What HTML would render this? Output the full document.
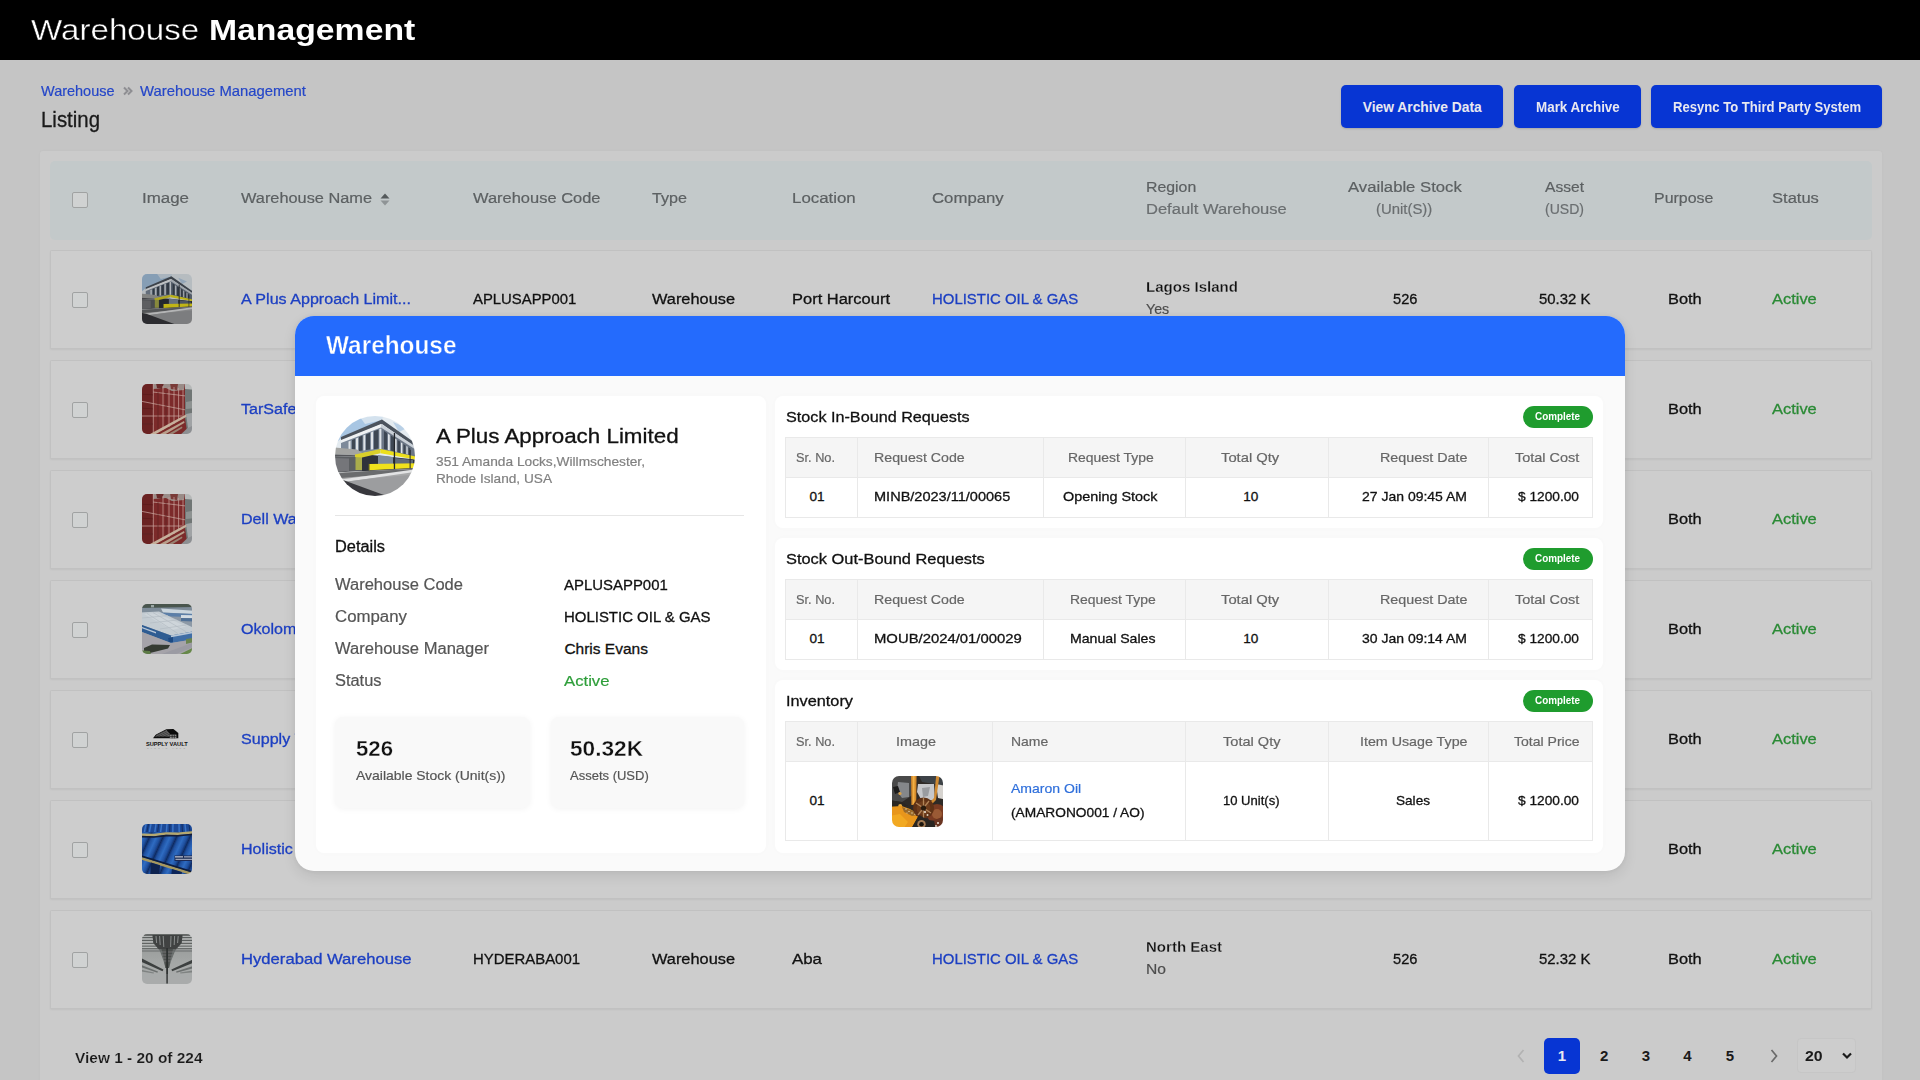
<!DOCTYPE html>
<html><head><meta charset="utf-8"><title>Warehouse Management</title>
<style>
*{box-sizing:border-box;margin:0;padding:0}
html,body{width:1920px;height:1080px;overflow:hidden;background:#c5c5c5;font-family:"Liberation Sans",sans-serif;}
.abs{position:absolute}
.t{position:absolute;white-space:pre;transform-origin:0 0;}
#topbar{left:0;top:0;width:1920px;height:60px;background:#000}
.btn{position:absolute;top:85px;height:43px;background:#0735d3;border-radius:5px;box-shadow:0 1px 2px rgba(0,0,0,.15)}
#panel{left:40px;top:151px;width:1842px;height:960px;background:#cbcbcb;border-radius:3px;box-shadow:0 0 3px rgba(0,0,0,.03)}
#thead{left:50px;top:161px;width:1822px;height:78.5px;background:#c3c9ca;border-radius:5px}
.row{position:absolute;left:50px;width:1822px;height:99.5px;background:#cdcdcd;border:1px solid #c1c1c1;border-radius:1.5px;box-shadow:0 1px 2px rgba(0,0,0,.05)}
.cb{position:absolute;left:72px;width:16px;height:16px;border:1px solid #a0a2a2;border-radius:2px;background:#d0d2d2}
.th{position:absolute;left:142px;width:50px;height:50px;border-radius:5px;overflow:hidden}
.th svg{display:block}
#modal{left:295px;top:316px;width:1330px;height:555px;border-radius:19px;background:#fafafa;box-shadow:0 5px 14px rgba(0,0,0,.09),0 0 5px rgba(0,0,0,.05);overflow:hidden}
#mhead{left:0;top:0;width:1330px;height:60px;background:#246bfd}
.card{position:absolute;background:#fff;border-radius:8px;box-shadow:0 0 8px rgba(0,0,0,.015)}
.stat{position:absolute;top:717px;height:91px;background:#f9f9f9;border-radius:8px;box-shadow:0 1px 6px rgba(0,0,0,.05)}
.tbl{position:absolute;left:785px;width:808px;border:1px solid #e9e9e9;background:#fff}
.tbl .hd{position:absolute;left:0;top:0;width:100%;height:40px;background:#f5f5f5;border-bottom:1px solid #e9e9e9}
.tbl i{position:absolute;top:0;width:1px;height:100%;background:#e9e9e9}
.badge{position:absolute;left:1523px;width:70px;height:22px;border-radius:11px;background:#1f9c2e}
</style></head><body>
<svg width="0" height="0" style="position:absolute">
<defs>
<filter id="bl" x="-20%" y="-20%" width="140%" height="140%"><feGaussianBlur stdDeviation="0.45"/></filter>
<filter id="bl2" x="-20%" y="-20%" width="140%" height="140%"><feGaussianBlur stdDeviation="0.7"/></filter>
<symbol id="im1" viewBox="0 0 80 80" overflow="visible">
 <rect x="-6" y="-6" width="92" height="92" fill="#e4ebf0"/>
 <polygon points="-6,-6 38,-6 47,4 8,21 -6,32" fill="#a8c6e3"/>
 <polygon points="20,-6 50,-6 47,4 30,8" fill="#d4e2ee"/>
 <polygon points="58,6 72,12 64,16" fill="#b9d0e6"/>
 <!-- roof -->
 <polygon points="6,21 47,3.5 86,31 86,35 47,8 6,25" fill="#4b535d"/>
 <polygon points="6,24 46,8 46,11.5 6,27.5" fill="#eef1f3"/>
 <polygon points="46,8 86,34 86,37 46,11.5" fill="#c9d0d7"/>
 <!-- upper facade -->
 <polygon points="6,27 46,11.5 46,34 22,38 6,34" fill="#7d8a9a"/>
 <polygon points="46,11.5 86,37 86,44 46,34" fill="#6c7786"/>
 <g fill="#3c4652"><polygon points="17,24 20,22.8 20,35.5 17,36"/><polygon points="24,21 27.5,19.6 27.5,34.5 24,35"/><polygon points="31,18.4 35,16.8 35,33.4 31,34"/><polygon points="39,15.2 43.5,13.4 43.5,32.6 39,33.2"/><polygon points="49,15 52,17 52,33.6 49,33"/><polygon points="56,19.5 59,21.5 59,35.4 56,34.6"/><polygon points="62.5,24 65,25.6 65,36.8 62.5,36.2"/><polygon points="68.5,28 70.5,29.4 70.5,38 68.5,37.6"/><polygon points="73.5,31.2 75.5,32.6 75.5,39.2 73.5,38.8"/></g>
 <g fill="#dfe4e8"><polygon points="13.5,25.6 15.6,24.8 15.6,36.4 13.5,36.8"/><polygon points="21,22.6 23,21.8 23,35.2 21,35.6"/><polygon points="28.4,19.4 30.2,18.7 30.2,34.2 28.4,34.5"/><polygon points="36,16.4 38,15.6 38,33.2 36,33.5"/><polygon points="44.4,13 46.4,12.4 46.4,33 44.4,33"/><polygon points="53,17.8 54.8,19 54.8,34.4 53,34"/><polygon points="60,22.4 61.6,23.4 61.6,36 60,35.6"/><polygon points="66,26.4 67.4,27.3 67.4,37.2 66,36.9"/><polygon points="71.4,30 72.6,30.8 72.6,38.4 71.4,38.1"/></g>
 <!-- canopy left -->
 <polygon points="-6,31 22,33.5 28,37.5 28,39.5 -6,38" fill="#a3a4a2"/>
 <polygon points="-6,38 28,39.5 28,41 -6,40" fill="#55575a"/>
 <!-- ground floor -->
 <polygon points="-6,40 28,41 28,55 -6,57" fill="#5c5e62"/>
 <polygon points="-2,42 14,42.5 14,55 -2,56" fill="#74767a"/>
 <polygon points="27,38 86,44 86,56 27,55" fill="#2f333b"/>
 <polygon points="43,39 58,41 58,48 43,48" fill="#7d8b9b"/>
 <polygon points="60,42 78,44 78,48 60,48" fill="#5e6a78"/>
 <!-- olive pillar -->
 <polygon points="20.5,39 27,39.5 27,54 20.5,54" fill="#a9ac4c"/>
 <!-- yellow bands -->
 <polygon points="20,38.6 45.5,33 45.5,37.2 27,41.4 20,41" fill="#d9cf2a"/>
 <polygon points="45.5,33 86,41.6 86,44.6 45.5,37.2" fill="#ecdf1c"/>
 <polygon points="34,48 86,47.2 86,51.6 34,54.2" fill="#f0e21a"/>
 <rect x="33.6" y="47.8" width="1" height="6.6" fill="#6b6a2a"/>
 <!-- lamp post -->
 <rect x="58.8" y="17" width="1.3" height="37" fill="#23262c"/>
 <rect x="74.6" y="34" width="1" height="19" fill="#23262c"/>
 <!-- ground -->
 <polygon points="-6,57 30,55 86,52 86,86 -6,86" fill="#a7a8a9"/>
 <polygon points="-6,58 34,55 86,53 86,55 30,60 -6,63" fill="#6b6c6e"/>
 <polygon points="2,64 86,52.5 86,55 10,66" fill="#e2e3e4"/>
 <polygon points="8,66 40,62 86,58 86,86 50,86" fill="#9c9d9f"/>
 <polygon points="-6,61 8,64 68,86 -6,86" fill="#38393c"/>
</symbol>
<symbol id="im2" viewBox="0 0 50 50" overflow="visible">
 <rect x="-4" y="-4" width="58" height="58" fill="#7b2c2a"/>
 <rect x="-4" y="-4" width="15" height="58" fill="#6a2323"/>
 <polygon points="11,-4 42,-4 42,6 30,7 24,4 11,5" fill="#9a8c88"/>
 <polygon points="14,-1 22,-1 20,5 15,4" fill="#6a2a2a"/>
 <polygon points="28,-1 36,0 35,6 29,5" fill="#7a3a38"/>
 <g stroke="#c79d97" stroke-width=".9" opacity=".85"><line x1="11.3" y1="0" x2="11.3" y2="50"/><line x1="21" y1="2" x2="21" y2="46"/><line x1="27" y1="3" x2="27" y2="43"/><line x1="32" y1="3" x2="32" y2="40"/><line x1="36.6" y1="4" x2="36.6" y2="37"/><line x1="41" y1="5" x2="41" y2="34"/></g>
 <g stroke="#c9a59f" stroke-width=".9" opacity=".8"><line x1="-2" y1="17" x2="44" y2="26"/><line x1="-2" y1="32" x2="40" y2="32"/><line x1="11" y1="8" x2="44" y2="12"/></g>
 <g stroke="#531a1a" stroke-width=".8" opacity=".7"><line x1="0" y1="10" x2="11" y2="11"/><line x1="0" y1="24" x2="11" y2="25"/><line x1="0" y1="40" x2="11" y2="40"/><line x1="16" y1="8" x2="16" y2="46"/><line x1="24" y1="8" x2="24" y2="42"/></g>
 <!-- right side -->
 <polygon points="43,-4 54,-4 54,54 46,54 43,34" fill="#6f7675"/>
 <polygon points="42,-4 54,-4 54,6 43,5" fill="#b5b8b8"/>
 <polygon points="44,18 54,16 54,24 44,25" fill="#8d9291"/>
 <polygon points="35,54 54,36 54,54" fill="#8d9093"/>
 <polygon points="44,30 54,28 54,40 46,44" fill="#a0a3a5"/>
 <!-- pallet diagonals -->
 <polygon points="8,50 44,30.6 44.6,32.8 13,50.4" fill="#c6b09c"/>
 <polygon points="18,50 42,37 42.6,38.8 23,50.4" fill="#b89f8c"/>
 <polygon points="26,50 40,42.5 40.4,44 30,50.4" fill="#9a8272"/>
</symbol>
<symbol id="im4" viewBox="0 0 50 50" overflow="visible">
 <rect x="-4" y="-4" width="58" height="58" fill="#8d99a6"/>
 <rect x="-4" y="-4" width="58" height="8" fill="#48554e"/>
 <rect x="9" y="1" width="3" height="2.4" fill="#9aa6a4"/>
 <polygon points="-4,4 54,3 54,9 -4,9" fill="#7e8c99"/>
 <!-- secondary buildings -->
 <polygon points="19,4.6 54,7 54,10 21,8.6" fill="#cbd6de"/>
 <polygon points="17,8.6 54,10 54,13 30,12.6 17,10.4" fill="#5b7fa8"/>
 <polygon points="39,11 54,11.4 54,14.4 39,14" fill="#d3dce3"/>
 <polygon points="39,14 54,14.4 54,17.6 39,17" fill="#4f6f96"/>
 <!-- main roof -->
 <polygon points="-4,8.6 17,7.4 54,25 54,27 29,31.6 -4,19.6" fill="#c4ccd2"/>
 <polygon points="2,10 15,9 44,22.6 30,26" fill="#ced5da"/>
 <g stroke="#b3bcc3" stroke-width=".7"><line x1="5" y1="9.4" x2="36" y2="29.6"/><line x1="11" y1="8.6" x2="44" y2="27.6"/><line x1="0" y1="14" x2="26" y2="11.6"/><line x1="8" y1="19" x2="35" y2="16"/><line x1="18" y1="25" x2="44" y2="21"/></g>
 <!-- walls -->
 <polygon points="-4,19.6 29,31.6 29,39 -4,26.4" fill="#2f5c92"/>
 <polygon points="-4,21.4 14,28 14,29.4 -4,22.8" fill="#b9c8d8"/>
 <polygon points="29,31.6 54,27 54,35 29,39" fill="#3f6ea6"/>
 <polygon points="29,31.6 54,27 54,28.6 29,33.2" fill="#b7c6d6"/>
 <polygon points="26,34 31,33 31,38.6 27,38.2" fill="#1f4a82"/>
 <!-- ground -->
 <polygon points="-4,26.4 29,39 54,35 54,54 -4,54" fill="#a5a3a9"/>
 <polygon points="9,54 54,37.6 54,42 24,54" fill="#9b9ba3"/>
 <polygon points="30,54 54,42.4 54,54" fill="#66884a"/>
 <polygon points="44,35 54,33.4 54,37.4 44,40" fill="#6b8450"/>
 <polygon points="2,44 10,40.6 28,41 26,44.6 8,49 2,49" fill="#343a30"/>
 <polygon points="-4,46 8,47 10,54 -4,54" fill="#5c7a44"/>
</symbol>
<symbol id="im5" viewBox="0 0 50 50" overflow="visible">
 <polygon points="11.3,23.8 14,20.4 24.3,15.2 31.4,14.9 36.3,19 36.3,24.3 11.3,24.3" fill="#0c0c0c"/>
 <polygon points="14.6,20.8 24.4,15.9 27.6,19.4 27.6,22.4 13,22.4" fill="#6d6d6d"/>
 <g stroke="#0c0c0c" stroke-width=".45"><line x1="13" y1="22" x2="24" y2="16.6"/><line x1="15" y1="22.6" x2="25.6" y2="17.6"/><line x1="18" y1="22.8" x2="26.8" y2="18.8"/><line x1="21.6" y1="22.8" x2="27.6" y2="20.2"/></g>
 <rect x="27.8" y="20.6" width="6.6" height="3.7" fill="#8a8a8a"/>
 <g fill="#0c0c0c"><rect x="29.8" y="20.6" width=".6" height="3.7"/><rect x="31.9" y="20.6" width=".6" height="3.7"/><rect x="27.8" y="22.2" width="6.6" height=".5"/></g>
 <text x="3.9" y="31.5" font-family="Liberation Sans, sans-serif" font-weight="700" font-size="4.7" fill="#111" textLength="41.8" lengthAdjust="spacingAndGlyphs">SUPPLY VAULT</text>
 <text x="5" y="35.4" font-family="Liberation Sans, sans-serif" font-size="2.4" fill="#9a9a9a" textLength="38" lengthAdjust="spacing">SLOGAN HERE</text>
</symbol>
<symbol id="im6" viewBox="0 0 50 50" overflow="visible">
 <defs><linearGradient id="g6" x1="0" y1="0" x2="1" y2="0.45" spreadMethod="repeat" gradientUnits="userSpaceOnUse" gradientTransform="scale(11.2 11.2)">
  <stop offset="0" stop-color="#0f2b62"/><stop offset=".18" stop-color="#1f4f9e"/><stop offset=".5" stop-color="#2f6cc2"/><stop offset=".8" stop-color="#1f4f9e"/><stop offset="1" stop-color="#0f2b62"/></linearGradient></defs>
 <rect x="-4" y="-4" width="58" height="58" fill="url(#g6)"/>
 <!-- top band -->
 <rect x="-4" y="-4" width="58" height="12.5" fill="#1c4a98"/>
 <g stroke="#3a73c6" stroke-width="1.5"><line x1="4" y1="0" x2="2.4" y2="8"/><line x1="9" y1="0" x2="7.4" y2="8"/><line x1="14" y1="0" x2="12.8" y2="8"/><line x1="19.6" y1="0" x2="18.6" y2="8"/><line x1="25" y1="0" x2="24.4" y2="8"/><line x1="31" y1="0" x2="30.8" y2="8"/><line x1="37" y1="0" x2="37.2" y2="8"/><line x1="43" y1="0" x2="43.8" y2="8"/></g>
 <g stroke="#12306a" stroke-width="1.1"><line x1="6.5" y1="0" x2="4.9" y2="8"/><line x1="16.8" y1="0" x2="15.6" y2="8"/><line x1="28" y1="0" x2="27.6" y2="8"/><line x1="40" y1="0" x2="40.5" y2="8"/><line x1="47" y1="0" x2="48" y2="8"/></g>
 <!-- straps -->
 <polygon points="-2,9.4 12,9.8 24,8.2 36,8.6 54,6.8 54,9.2 36,11 24,10.8 12,12.2 -2,11.8" fill="#b5a870"/>
 <polygon points="-2,11.8 12,12.2 24,10.8 36,11 54,9.2 54,10.8 36,12.6 24,12.4 12,13.8 -2,13.4" fill="#121d38"/>
 <polygon points="-2,32.4 54,49.6 54,52.6 -2,35.2" fill="#a6985f"/>
 <polygon points="-2,30.8 54,48 54,49.8 -2,32.6" fill="#0d1c3e"/>
 <polygon points="9,38.4 18,41.2 17,54 8,54" fill="#0e2250"/>
 <polygon points="30,45 40,48 39,54 29,54" fill="#10285a"/>
 <!-- label -->
 <rect x="32.5" y="31.4" width="22" height="5.6" fill="#1b2c55"/>
 <rect x="33" y="32.2" width="8" height="1.3" fill="#b9bccb"/><rect x="42" y="32.2" width="9" height="1.3" fill="#9aa0b6"/>
 <rect x="33.5" y="34.8" width="17" height="1.1" fill="#a9aec2"/>
</symbol>
<symbol id="im7" viewBox="0 0 50 50" overflow="visible">
 <defs><linearGradient id="g7" x1="0" y1="0" x2="0" y2="1"><stop offset="0" stop-color="#8d908f"/><stop offset=".55" stop-color="#a4a7a6"/><stop offset="1" stop-color="#adafaf"/></linearGradient></defs>
 <rect x="-4" y="-4" width="58" height="58" fill="url(#g7)"/>
 <g fill="#5c605f"><rect x="-4" y="3" width="58" height="1.2"/><rect x="-4" y="5.8" width="58" height="1.2"/><rect x="-4" y="8.8" width="58" height="1.1"/><rect x="-4" y="11.6" width="58" height="1"/><rect x="-4" y="14.2" width="58" height=".9"/><rect x="-4" y="16.6" width="58" height=".8"/></g>
 <g fill="#b9bcbb"><rect x="-4" y="1.4" width="58" height="1.4"/><rect x="-4" y="4.4" width="58" height="1.2"/><rect x="-4" y="7.3" width="58" height="1.2"/><rect x="-4" y="10.2" width="58" height="1.1"/><rect x="-4" y="12.9" width="58" height="1"/></g>
 <rect x="2" y=".6" width="46" height=".9" fill="#2a2d2c"/>
 <!-- funnel -->
 <polygon points="10.5,1 40.5,1 39.6,9 33,17 29,27 27,34 23.4,34 21.6,27 18,17 11.4,9" fill="#666a69"/><polygon points="10.5,1 40.5,1 39.6,9 34,15 16.6,15 11.4,9" fill="#3f4342"/><polygon points="19.5,15 31,15 28,27 27,34 23.4,34 22.4,27" fill="#4d5150"/>
 <g stroke="#9da09f" stroke-width=".8"><line x1="14" y1="2" x2="14.6" y2="9"/><line x1="17.6" y1="2" x2="18.2" y2="11"/><line x1="21.2" y1="2" x2="21.8" y2="13"/><line x1="29" y1="2" x2="28.6" y2="13"/><line x1="32.6" y1="2" x2="32.2" y2="11"/><line x1="36.2" y1="2" x2="35.6" y2="9"/></g>
 <g stroke="#7f8382" stroke-width=".7"><line x1="19" y1="18" x2="32" y2="18"/><line x1="20" y1="21" x2="31" y2="21"/><line x1="21" y1="24" x2="30" y2="24"/><line x1="22" y1="27" x2="29" y2="27"/></g>
 <rect x="24.2" y="14" width="1.8" height="35.5" fill="#2e3231"/>
 <!-- diagonal beams -->
 <polygon points="-4,22.6 21.4,35.6 20.6,37.2 -4,26.4" fill="#3c403f"/>
 <polygon points="54,24 29.4,35.6 30.2,37.2 54,27.8" fill="#3c403f"/>
 <polygon points="-4,29.6 16,37.6 15.4,38.8 -4,32" fill="#6c706f"/>
 <polygon points="54,31 34,37.6 34.6,38.8 54,33.4" fill="#6c706f"/>
 <polygon points="-4,35 12,38.6 11.6,39.6 -4,37" fill="#7f8382"/>
 <polygon points="54,36 38,38.6 38.4,39.6 54,38" fill="#7f8382"/>
 <rect x="-4" y="40" width="58" height="14" fill="#a8abab" opacity=".75"/>
 <rect x="24.4" y="40" width="1.4" height="9.5" fill="#3a3e3d"/>
</symbol>
<symbol id="im8" viewBox="0 0 51 51" overflow="visible">
 <rect x="-4" y="-4" width="59" height="59" fill="#2f2a27"/>
 <polygon points="-4,-4 20,-4 19,20 10,26 -4,24" fill="#4a4a4a"/>
 <polygon points="6,6 17,7 17,21 10,22 5,15" fill="#85878a"/>
 <polygon points="1,11 6,10 8,16 3,18" fill="#1d1b1a"/>
 <polygon points="25,-4 55,-4 55,10 42,8 30,6" fill="#3e4246"/>
 <polygon points="26,8 42,8 43,24 30,25 25,16" fill="#c6c7ca"/>
 <polygon points="30,12 38,11 36,20 31,21" fill="#9a9ca0"/>
 <polygon points="44,8 55,10 55,24 46,22" fill="#d6d3cf"/>
 <!-- amber streams -->
 <polygon points="19,-4 24.6,-4 24.2,29 19.4,29" fill="#d48a2c"/>
 <polygon points="20.6,-4 22.6,-4 22.4,28 20.8,28" fill="#f0b045"/>
 <polygon points="44.5,-4 48,-4 44,24 38,30 36,28 42,22" fill="#d08a30"/>
 <!-- mid dark -->
 <polygon points="-4,24 10,26 16,30 -4,32" fill="#2a2620"/>
 <circle cx="8" cy="17.5" r="1.6" fill="#d8a24a"/>
 <circle cx="8.2" cy="30" r="2" fill="#e0a840"/>
 <!-- amber pool -->
 <polygon points="-4,31 9.5,30 18,33 27,39 18,55 -4,55" fill="#e8961c"/>
 <polygon points="-4,40 8,38 16,46 10,55 -4,55" fill="#f2a922"/>
 <polygon points="10,31 22,35 26,39 20,40 12,36" fill="#9a6a2a"/>
 <g fill="#e8d9b8"><circle cx="14" cy="33" r=".7"/><circle cx="17" cy="35.4" r=".7"/><circle cx="20" cy="37" r=".7"/><circle cx="23" cy="38.4" r=".6"/><circle cx="15" cy="37" r=".6"/></g>
 <!-- gears -->
 <circle cx="45" cy="38" r="10" fill="#7a3a22"/>
 <circle cx="45" cy="38" r="5" fill="#9a5a34"/>
 <circle cx="31.5" cy="32" r="10.5" fill="#5e3016"/>
 <circle cx="31.5" cy="32" r="7" fill="#6e3c1c"/>
 <g stroke="#b08458" stroke-width="1.3"><line x1="24" y1="27" x2="39" y2="37"/><line x1="26" y1="39" x2="37" y2="25"/><line x1="31.5" y1="22" x2="31.5" y2="42"/></g>
 <circle cx="31.5" cy="32" r="2.6" fill="#2a1a10"/>
 <circle cx="33" cy="36" r="1.1" fill="#e6dccc"/><circle cx="35.5" cy="39" r="1" fill="#e0d2bc"/>
 <!-- bottom -->
 <polygon points="18,55 27,39 36,44 52,46 55,55" fill="#2b2622"/>
 <circle cx="29.5" cy="48.3" r="4.2" fill="#a57c54"/>
 <circle cx="29.5" cy="48.3" r="2.3" fill="#1a1410"/>
 <polygon points="42,44 55,40 55,55 44,55" fill="#6a3420"/>
 <circle cx="46" cy="47" r="1" fill="#efe6da"/><circle cx="44" cy="50" r=".9" fill="#efe6da"/>
</symbol>

</defs></svg>

<!-- ===== background page ===== -->
<div class="abs" id="topbar"></div>
<div class="btn" style="left:1341px;width:162px"></div>
<div class="btn" style="left:1514px;width:127px"></div>
<div class="btn" style="left:1651px;width:231px"></div>
<svg class="abs" style="left:122px;top:85px" width="12" height="12" viewBox="0 0 12 12"><path d="M2 2.5 L5.5 6 L2 9.5 M6 2.5 L9.5 6 L6 9.5" stroke="#8e8e92" stroke-width="2" fill="none"/></svg>
<div class="abs" id="panel"></div>
<div class="abs" id="thead"></div>
<div class="cb" style="top:192px"></div>
<svg class="abs" style="left:380px;top:193px" width="10" height="13" viewBox="0 0 10 13"><polygon points="5,0.5 9.5,5.5 0.5,5.5" fill="#555a5c"/><polygon points="5,12.5 9.5,7.5 0.5,7.5" fill="#8f9496"/></svg>
<div class="row" style="top:249.5px"></div>
<div class="cb" style="top:291.7px"></div>
<div class="th" style="top:274px"><svg width="50" height="50"><use href="#im1" filter="url(#bl)"/></svg><div class="abs" style="left:0;top:0;width:50px;height:50px;background:rgba(0,0,0,.2)"></div></div>
<div class="row" style="top:359.5px"></div>
<div class="cb" style="top:401.7px"></div>
<div class="th" style="top:384px"><svg width="50" height="50"><use href="#im2" filter="url(#bl)"/></svg></div>
<div class="row" style="top:469.5px"></div>
<div class="cb" style="top:511.7px"></div>
<div class="th" style="top:494px"><svg width="50" height="50"><use href="#im2" filter="url(#bl)"/></svg></div>
<div class="row" style="top:579.5px"></div>
<div class="cb" style="top:621.7px"></div>
<div class="th" style="top:604px"><svg width="50" height="50"><use href="#im4" filter="url(#bl)"/></svg></div>
<div class="row" style="top:689.5px"></div>
<div class="cb" style="top:731.7px"></div>
<div class="th" style="top:714px"><svg width="50" height="50"><use href="#im5"/></svg></div>
<div class="row" style="top:799.5px"></div>
<div class="cb" style="top:841.7px"></div>
<div class="th" style="top:824px"><svg width="50" height="50"><use href="#im6" filter="url(#bl)"/></svg></div>
<div class="row" style="top:909.5px"></div>
<div class="cb" style="top:951.7px"></div>
<div class="th" style="top:934px"><svg width="50" height="50"><use href="#im7" filter="url(#bl)"/></svg></div>

<!-- pagination -->
<svg class="abs" style="left:1514px;top:1047px" width="14" height="18" viewBox="0 0 14 18"><path d="M9.5 3 L4.5 9 L9.5 15" stroke="#b2b2b2" stroke-width="1.7" fill="none"/></svg>
<div class="abs" style="left:1544px;top:1038px;width:36px;height:36px;border-radius:5px;background:#0735d3"></div>
<svg class="abs" style="left:1767px;top:1047px" width="14" height="18" viewBox="0 0 14 18"><path d="M4.5 3 L9.5 9 L4.5 15" stroke="#6a6a6a" stroke-width="1.7" fill="none"/></svg>
<div class="abs" style="left:1797px;top:1038px;width:59px;height:35px;border-radius:4px;background:#cdcdcd;border:1px solid #c6c6c6"></div>
<svg class="abs" style="left:1841px;top:1051px" width="12" height="10" viewBox="0 0 12 10"><path d="M2 2.5 L6 6.5 L10 2.5" stroke="#1a1a1a" stroke-width="2.2" fill="none"/></svg>
<span class="t" style="left:30.50px;top:13.15px;font-size:29px;line-height:35px;color:#fff;transform:scaleX(1.1427);-webkit-text-stroke:0.38px #000;">Warehouse</span>
<span class="t" style="left:208.75px;top:13.15px;font-size:29px;line-height:35px;color:#fff;font-weight:700;transform:scaleX(1.1635);">Management</span>
<span class="t" style="left:41.00px;top:81.80px;font-size:15px;line-height:18px;color:#2446c8;transform:scaleX(0.9651);-webkit-text-stroke:0.2px;">Warehouse</span>
<span class="t" style="left:140.00px;top:81.80px;font-size:15px;line-height:18px;color:#2446c8;transform:scaleX(0.9888);-webkit-text-stroke:0.2px;">Warehouse Management</span>
<span class="t" style="left:41.00px;top:106.82px;font-size:21.3px;line-height:26px;color:#1a1a1a;transform:scaleX(0.9584);-webkit-text-stroke:0.3px;">Listing</span>
<span class="t" style="left:1362.80px;top:98.62px;font-size:13.8px;line-height:17px;color:#e8e8f0;font-weight:700;">View Archive Data</span>
<span class="t" style="left:1535.60px;top:98.62px;font-size:13.8px;line-height:17px;color:#e8e8f0;font-weight:700;transform:scaleX(0.9727);">Mark Archive</span>
<span class="t" style="left:1672.50px;top:98.62px;font-size:13.8px;line-height:17px;color:#e8e8f0;font-weight:700;transform:scaleX(0.9484);">Resync To Third Party System</span>
<span class="t" style="left:142.00px;top:189.46px;font-size:15.4px;line-height:18px;color:#5c6062;transform:scaleX(1.0986);-webkit-text-stroke:0.2px;">Image</span>
<span class="t" style="left:241.00px;top:189.46px;font-size:15.4px;line-height:18px;color:#5c6062;transform:scaleX(1.0610);-webkit-text-stroke:0.2px;">Warehouse Name</span>
<span class="t" style="left:472.50px;top:189.46px;font-size:15.4px;line-height:18px;color:#5c6062;transform:scaleX(1.0696);-webkit-text-stroke:0.2px;">Warehouse Code</span>
<span class="t" style="left:652.00px;top:189.46px;font-size:15.4px;line-height:18px;color:#5c6062;transform:scaleX(1.0487);-webkit-text-stroke:0.2px;">Type</span>
<span class="t" style="left:792.00px;top:189.46px;font-size:15.4px;line-height:18px;color:#5c6062;transform:scaleX(1.0953);-webkit-text-stroke:0.2px;">Location</span>
<span class="t" style="left:932.00px;top:189.46px;font-size:15.4px;line-height:18px;color:#5c6062;transform:scaleX(1.0892);-webkit-text-stroke:0.2px;">Company</span>
<span class="t" style="left:1145.50px;top:178.26px;font-size:15.4px;line-height:18px;color:#5c6062;transform:scaleX(1.0301);-webkit-text-stroke:0.2px;">Region</span>
<span class="t" style="left:1145.50px;top:200.26px;font-size:15.4px;line-height:18px;color:#6a6e70;transform:scaleX(1.0729);-webkit-text-stroke:0.2px;">Default Warehouse</span>
<span class="t" style="left:1347.53px;top:178.46px;font-size:15.4px;line-height:18px;color:#5c6062;transform:scaleX(1.0838);-webkit-text-stroke:0.2px;">Available Stock</span>
<span class="t" style="left:1376.28px;top:200.36px;font-size:15.4px;line-height:18px;color:#6a6e70;transform:scaleX(0.9675);-webkit-text-stroke:0.2px;">(Unit(S))</span>
<span class="t" style="left:1545.00px;top:178.46px;font-size:15.4px;line-height:18px;color:#5c6062;transform:scaleX(1.0130);-webkit-text-stroke:0.2px;">Asset</span>
<span class="t" style="left:1545.00px;top:200.36px;font-size:15.4px;line-height:18px;color:#6a6e70;transform:scaleX(0.9123);-webkit-text-stroke:0.2px;">(USD)</span>
<span class="t" style="left:1654.33px;top:189.46px;font-size:15.4px;line-height:18px;color:#5c6062;transform:scaleX(1.0353);-webkit-text-stroke:0.2px;">Purpose</span>
<span class="t" style="left:1771.50px;top:189.46px;font-size:15.4px;line-height:18px;color:#5c6062;transform:scaleX(1.0747);-webkit-text-stroke:0.2px;">Status</span>
<span class="t" style="left:241.00px;top:289.70px;font-size:15.3px;line-height:18px;color:#1c3fc2;transform:scaleX(1.0522);-webkit-text-stroke:0.3px;">A Plus Approach Limit...</span>
<span class="t" style="left:472.50px;top:289.70px;font-size:15.3px;line-height:18px;color:#111;transform:scaleX(0.9712);-webkit-text-stroke:0.3px;">APLUSAPP001</span>
<span class="t" style="left:652.00px;top:289.70px;font-size:15.3px;line-height:18px;color:#111;transform:scaleX(1.0686);-webkit-text-stroke:0.3px;">Warehouse</span>
<span class="t" style="left:792.00px;top:289.70px;font-size:15.3px;line-height:18px;color:#111;transform:scaleX(1.0773);-webkit-text-stroke:0.3px;">Port Harcourt</span>
<span class="t" style="left:932.00px;top:289.70px;font-size:15.3px;line-height:18px;color:#1c3fc2;transform:scaleX(0.9756);-webkit-text-stroke:0.3px;">HOLISTIC OIL &amp; GAS</span>
<span class="t" style="left:1145.50px;top:278.30px;font-size:15.3px;line-height:18px;color:#111;font-weight:700;transform:scaleX(0.9840);-webkit-text-stroke:0.3px #cecece;">Lagos Island</span>
<span class="t" style="left:1145.50px;top:300.20px;font-size:15.3px;line-height:18px;color:#4d4d4d;transform:scaleX(0.9312);-webkit-text-stroke:0.2px;">Yes</span>
<span class="t" style="left:1392.50px;top:289.70px;font-size:15.3px;line-height:18px;color:#111;transform:scaleX(0.9557);-webkit-text-stroke:0.3px;">526</span>
<span class="t" style="left:1538.75px;top:289.70px;font-size:15.3px;line-height:18px;color:#111;transform:scaleX(0.9766);-webkit-text-stroke:0.3px;">50.32 K</span>
<span class="t" style="left:1667.53px;top:289.70px;font-size:15.3px;line-height:18px;color:#111;transform:scaleX(1.0725);-webkit-text-stroke:0.3px;">Both</span>
<span class="t" style="left:1771.50px;top:289.70px;font-size:15.3px;line-height:18px;color:#2a8a35;transform:scaleX(1.0743);-webkit-text-stroke:0.3px;">Active</span>
<span class="t" style="left:241.00px;top:399.70px;font-size:15.3px;line-height:18px;color:#1c3fc2;transform:scaleX(1.0522);-webkit-text-stroke:0.3px;">TarSafe Warehouse</span>
<span class="t" style="left:472.50px;top:399.70px;font-size:15.3px;line-height:18px;color:#111;transform:scaleX(0.9510);-webkit-text-stroke:0.3px;">TARSAFE001</span>
<span class="t" style="left:652.00px;top:399.70px;font-size:15.3px;line-height:18px;color:#111;transform:scaleX(1.0686);-webkit-text-stroke:0.3px;">Warehouse</span>
<span class="t" style="left:792.00px;top:399.70px;font-size:15.3px;line-height:18px;color:#111;transform:scaleX(0.9300);-webkit-text-stroke:0.3px;">Lagos</span>
<span class="t" style="left:932.00px;top:399.70px;font-size:15.3px;line-height:18px;color:#1c3fc2;transform:scaleX(0.9756);-webkit-text-stroke:0.3px;">HOLISTIC OIL &amp; GAS</span>
<span class="t" style="left:1145.50px;top:388.30px;font-size:15.3px;line-height:18px;color:#111;font-weight:700;transform:scaleX(0.9840);-webkit-text-stroke:0.3px #cecece;">Lagos Island</span>
<span class="t" style="left:1145.50px;top:410.20px;font-size:15.3px;line-height:18px;color:#4d4d4d;transform:scaleX(0.9312);-webkit-text-stroke:0.2px;">Yes</span>
<span class="t" style="left:1392.50px;top:399.70px;font-size:15.3px;line-height:18px;color:#111;transform:scaleX(0.9557);-webkit-text-stroke:0.3px;">526</span>
<span class="t" style="left:1538.75px;top:399.70px;font-size:15.3px;line-height:18px;color:#111;transform:scaleX(0.9766);-webkit-text-stroke:0.3px;">48.10 K</span>
<span class="t" style="left:1667.53px;top:399.70px;font-size:15.3px;line-height:18px;color:#111;transform:scaleX(1.0725);-webkit-text-stroke:0.3px;">Both</span>
<span class="t" style="left:1771.50px;top:399.70px;font-size:15.3px;line-height:18px;color:#2a8a35;transform:scaleX(1.0743);-webkit-text-stroke:0.3px;">Active</span>
<span class="t" style="left:241.00px;top:509.70px;font-size:15.3px;line-height:18px;color:#1c3fc2;transform:scaleX(1.0522);-webkit-text-stroke:0.3px;">Dell Warehouse</span>
<span class="t" style="left:472.50px;top:509.70px;font-size:15.3px;line-height:18px;color:#111;transform:scaleX(0.9484);-webkit-text-stroke:0.3px;">DELLWARE001</span>
<span class="t" style="left:652.00px;top:509.70px;font-size:15.3px;line-height:18px;color:#111;transform:scaleX(1.0686);-webkit-text-stroke:0.3px;">Warehouse</span>
<span class="t" style="left:792.00px;top:509.70px;font-size:15.3px;line-height:18px;color:#111;transform:scaleX(0.9300);-webkit-text-stroke:0.3px;">Abuja</span>
<span class="t" style="left:932.00px;top:509.70px;font-size:15.3px;line-height:18px;color:#1c3fc2;transform:scaleX(0.9756);-webkit-text-stroke:0.3px;">HOLISTIC OIL &amp; GAS</span>
<span class="t" style="left:1145.50px;top:498.30px;font-size:15.3px;line-height:18px;color:#111;font-weight:700;transform:scaleX(0.9840);-webkit-text-stroke:0.3px #cecece;">Lagos Island</span>
<span class="t" style="left:1145.50px;top:520.20px;font-size:15.3px;line-height:18px;color:#4d4d4d;transform:scaleX(1.0224);-webkit-text-stroke:0.2px;">No</span>
<span class="t" style="left:1392.50px;top:509.70px;font-size:15.3px;line-height:18px;color:#111;transform:scaleX(0.9557);-webkit-text-stroke:0.3px;">526</span>
<span class="t" style="left:1538.75px;top:509.70px;font-size:15.3px;line-height:18px;color:#111;transform:scaleX(0.9766);-webkit-text-stroke:0.3px;">47.20 K</span>
<span class="t" style="left:1667.53px;top:509.70px;font-size:15.3px;line-height:18px;color:#111;transform:scaleX(1.0725);-webkit-text-stroke:0.3px;">Both</span>
<span class="t" style="left:1771.50px;top:509.70px;font-size:15.3px;line-height:18px;color:#2a8a35;transform:scaleX(1.0743);-webkit-text-stroke:0.3px;">Active</span>
<span class="t" style="left:241.00px;top:619.70px;font-size:15.3px;line-height:18px;color:#1c3fc2;transform:scaleX(1.0522);-webkit-text-stroke:0.3px;">Okolomade Store</span>
<span class="t" style="left:472.50px;top:619.70px;font-size:15.3px;line-height:18px;color:#111;transform:scaleX(0.9475);-webkit-text-stroke:0.3px;">OKOLOMAD001</span>
<span class="t" style="left:652.00px;top:619.70px;font-size:15.3px;line-height:18px;color:#111;transform:scaleX(1.0686);-webkit-text-stroke:0.3px;">Warehouse</span>
<span class="t" style="left:792.00px;top:619.70px;font-size:15.3px;line-height:18px;color:#111;transform:scaleX(0.9300);-webkit-text-stroke:0.3px;">Ikeja</span>
<span class="t" style="left:932.00px;top:619.70px;font-size:15.3px;line-height:18px;color:#1c3fc2;transform:scaleX(0.9756);-webkit-text-stroke:0.3px;">HOLISTIC OIL &amp; GAS</span>
<span class="t" style="left:1145.50px;top:608.30px;font-size:15.3px;line-height:18px;color:#111;font-weight:700;transform:scaleX(0.9826);-webkit-text-stroke:0.3px #cecece;">North East</span>
<span class="t" style="left:1145.50px;top:630.20px;font-size:15.3px;line-height:18px;color:#4d4d4d;transform:scaleX(1.0224);-webkit-text-stroke:0.2px;">No</span>
<span class="t" style="left:1392.50px;top:619.70px;font-size:15.3px;line-height:18px;color:#111;transform:scaleX(0.9557);-webkit-text-stroke:0.3px;">526</span>
<span class="t" style="left:1538.75px;top:619.70px;font-size:15.3px;line-height:18px;color:#111;transform:scaleX(0.9766);-webkit-text-stroke:0.3px;">51.02 K</span>
<span class="t" style="left:1667.53px;top:619.70px;font-size:15.3px;line-height:18px;color:#111;transform:scaleX(1.0725);-webkit-text-stroke:0.3px;">Both</span>
<span class="t" style="left:1771.50px;top:619.70px;font-size:15.3px;line-height:18px;color:#2a8a35;transform:scaleX(1.0743);-webkit-text-stroke:0.3px;">Active</span>
<span class="t" style="left:241.00px;top:729.70px;font-size:15.3px;line-height:18px;color:#1c3fc2;transform:scaleX(1.0522);-webkit-text-stroke:0.3px;">Supply Vault</span>
<span class="t" style="left:472.50px;top:729.70px;font-size:15.3px;line-height:18px;color:#111;transform:scaleX(0.9491);-webkit-text-stroke:0.3px;">SUPPLYVA001</span>
<span class="t" style="left:652.00px;top:729.70px;font-size:15.3px;line-height:18px;color:#111;transform:scaleX(1.0686);-webkit-text-stroke:0.3px;">Warehouse</span>
<span class="t" style="left:792.00px;top:729.70px;font-size:15.3px;line-height:18px;color:#111;transform:scaleX(0.9300);-webkit-text-stroke:0.3px;">Kano</span>
<span class="t" style="left:932.00px;top:729.70px;font-size:15.3px;line-height:18px;color:#1c3fc2;transform:scaleX(0.9756);-webkit-text-stroke:0.3px;">HOLISTIC OIL &amp; GAS</span>
<span class="t" style="left:1145.50px;top:718.30px;font-size:15.3px;line-height:18px;color:#111;font-weight:700;transform:scaleX(0.9826);-webkit-text-stroke:0.3px #cecece;">North East</span>
<span class="t" style="left:1145.50px;top:740.20px;font-size:15.3px;line-height:18px;color:#4d4d4d;transform:scaleX(1.0224);-webkit-text-stroke:0.2px;">No</span>
<span class="t" style="left:1392.50px;top:729.70px;font-size:15.3px;line-height:18px;color:#111;transform:scaleX(0.9557);-webkit-text-stroke:0.3px;">526</span>
<span class="t" style="left:1538.75px;top:729.70px;font-size:15.3px;line-height:18px;color:#111;transform:scaleX(0.9766);-webkit-text-stroke:0.3px;">49.90 K</span>
<span class="t" style="left:1667.53px;top:729.70px;font-size:15.3px;line-height:18px;color:#111;transform:scaleX(1.0725);-webkit-text-stroke:0.3px;">Both</span>
<span class="t" style="left:1771.50px;top:729.70px;font-size:15.3px;line-height:18px;color:#2a8a35;transform:scaleX(1.0743);-webkit-text-stroke:0.3px;">Active</span>
<span class="t" style="left:241.00px;top:839.70px;font-size:15.3px;line-height:18px;color:#1c3fc2;transform:scaleX(1.0522);-webkit-text-stroke:0.3px;">Holistic Depot</span>
<span class="t" style="left:472.50px;top:839.70px;font-size:15.3px;line-height:18px;color:#111;transform:scaleX(0.9507);-webkit-text-stroke:0.3px;">HOLISTIC001</span>
<span class="t" style="left:652.00px;top:839.70px;font-size:15.3px;line-height:18px;color:#111;transform:scaleX(1.0686);-webkit-text-stroke:0.3px;">Warehouse</span>
<span class="t" style="left:792.00px;top:839.70px;font-size:15.3px;line-height:18px;color:#111;transform:scaleX(0.9300);-webkit-text-stroke:0.3px;">Warri</span>
<span class="t" style="left:932.00px;top:839.70px;font-size:15.3px;line-height:18px;color:#1c3fc2;transform:scaleX(0.9756);-webkit-text-stroke:0.3px;">HOLISTIC OIL &amp; GAS</span>
<span class="t" style="left:1145.50px;top:828.30px;font-size:15.3px;line-height:18px;color:#111;font-weight:700;transform:scaleX(0.9840);-webkit-text-stroke:0.3px #cecece;">Lagos Island</span>
<span class="t" style="left:1145.50px;top:850.20px;font-size:15.3px;line-height:18px;color:#4d4d4d;transform:scaleX(1.0224);-webkit-text-stroke:0.2px;">No</span>
<span class="t" style="left:1392.50px;top:839.70px;font-size:15.3px;line-height:18px;color:#111;transform:scaleX(0.9557);-webkit-text-stroke:0.3px;">526</span>
<span class="t" style="left:1538.75px;top:839.70px;font-size:15.3px;line-height:18px;color:#111;transform:scaleX(0.9766);-webkit-text-stroke:0.3px;">50.00 K</span>
<span class="t" style="left:1667.53px;top:839.70px;font-size:15.3px;line-height:18px;color:#111;transform:scaleX(1.0725);-webkit-text-stroke:0.3px;">Both</span>
<span class="t" style="left:1771.50px;top:839.70px;font-size:15.3px;line-height:18px;color:#2a8a35;transform:scaleX(1.0743);-webkit-text-stroke:0.3px;">Active</span>
<span class="t" style="left:241.00px;top:949.70px;font-size:15.3px;line-height:18px;color:#1c3fc2;transform:scaleX(1.0877);-webkit-text-stroke:0.3px;">Hyderabad Warehouse</span>
<span class="t" style="left:472.50px;top:949.70px;font-size:15.3px;line-height:18px;color:#111;transform:scaleX(0.9754);-webkit-text-stroke:0.3px;">HYDERABA001</span>
<span class="t" style="left:652.00px;top:949.70px;font-size:15.3px;line-height:18px;color:#111;transform:scaleX(1.0686);-webkit-text-stroke:0.3px;">Warehouse</span>
<span class="t" style="left:792.00px;top:949.70px;font-size:15.3px;line-height:18px;color:#111;transform:scaleX(1.1022);-webkit-text-stroke:0.3px;">Aba</span>
<span class="t" style="left:932.00px;top:949.70px;font-size:15.3px;line-height:18px;color:#1c3fc2;transform:scaleX(0.9756);-webkit-text-stroke:0.3px;">HOLISTIC OIL &amp; GAS</span>
<span class="t" style="left:1145.50px;top:938.30px;font-size:15.3px;line-height:18px;color:#111;font-weight:700;transform:scaleX(0.9826);-webkit-text-stroke:0.3px #cecece;">North East</span>
<span class="t" style="left:1145.50px;top:960.20px;font-size:15.3px;line-height:18px;color:#4d4d4d;transform:scaleX(1.0224);-webkit-text-stroke:0.2px;">No</span>
<span class="t" style="left:1392.50px;top:949.70px;font-size:15.3px;line-height:18px;color:#111;transform:scaleX(0.9557);-webkit-text-stroke:0.3px;">526</span>
<span class="t" style="left:1538.75px;top:949.70px;font-size:15.3px;line-height:18px;color:#111;transform:scaleX(0.9766);-webkit-text-stroke:0.3px;">52.32 K</span>
<span class="t" style="left:1667.53px;top:949.70px;font-size:15.3px;line-height:18px;color:#111;transform:scaleX(1.0725);-webkit-text-stroke:0.3px;">Both</span>
<span class="t" style="left:1771.50px;top:949.70px;font-size:15.3px;line-height:18px;color:#2a8a35;transform:scaleX(1.0743);-webkit-text-stroke:0.3px;">Active</span>
<span class="t" style="left:75.00px;top:1049.30px;font-size:15px;line-height:18px;color:#1a1a1a;font-weight:700;transform:scaleX(1.0285);-webkit-text-stroke:0.2px #cbcbcb;">View 1 - 20 of 224</span>
<span class="t" style="left:1557.83px;top:1047.30px;font-size:15px;line-height:18px;color:#e8e8f0;font-weight:700;">1</span>
<span class="t" style="left:1600.03px;top:1047.30px;font-size:15px;line-height:18px;color:#1a1a1a;font-weight:700;">2</span>
<span class="t" style="left:1641.73px;top:1047.30px;font-size:15px;line-height:18px;color:#1a1a1a;font-weight:700;">3</span>
<span class="t" style="left:1683.23px;top:1047.30px;font-size:15px;line-height:18px;color:#1a1a1a;font-weight:700;">4</span>
<span class="t" style="left:1725.63px;top:1047.30px;font-size:15px;line-height:18px;color:#1a1a1a;font-weight:700;">5</span>
<span class="t" style="left:1805.40px;top:1047.30px;font-size:15px;line-height:18px;color:#1a1a1a;font-weight:700;transform:scaleX(1.0547);">20</span>

<!-- ===== modal ===== -->
<div class="abs" id="modal"><div class="abs" id="mhead"></div></div>
<div class="card" style="left:316px;top:396px;width:450px;height:456.5px"></div>
<div class="abs" style="left:335px;top:415.5px;width:80px;height:80px;border-radius:50%;overflow:hidden"><svg width="80" height="80"><use href="#im1" filter="url(#bl2)"/></svg></div>
<div class="abs" style="left:335px;top:515px;width:409px;height:1px;background:#e6e6e6"></div>
<div class="stat" style="left:335px;width:195px"></div>
<div class="stat" style="left:551px;width:193px"></div>

<div class="card" style="left:775px;top:396px;width:828px;height:132px"></div>
<div class="card" style="left:775px;top:538px;width:828px;height:132px"></div>
<div class="card" style="left:775px;top:680px;width:828px;height:172.5px"></div>
<div class="badge" style="top:405.5px"></div>
<div class="badge" style="top:547.5px"></div>
<div class="badge" style="top:689.5px"></div>
<div class="tbl" style="top:437px;height:81px"><div class="hd"></div><i style="left:71px"></i><i style="left:257px"></i><i style="left:399px"></i><i style="left:542px"></i><i style="left:702px"></i></div>
<div class="tbl" style="top:579px;height:81px"><div class="hd"></div><i style="left:71px"></i><i style="left:257px"></i><i style="left:399px"></i><i style="left:542px"></i><i style="left:702px"></i></div>
<div class="tbl" style="top:721px;height:120px"><div class="hd"></div><i style="left:71px"></i><i style="left:206px"></i><i style="left:399px"></i><i style="left:542px"></i><i style="left:702px"></i></div>
<div class="abs" style="left:892px;top:776px;width:51px;height:51px;border-radius:7px;overflow:hidden"><svg width="51" height="51"><use href="#im8" filter="url(#bl)"/></svg></div>
<span class="t" style="left:325.50px;top:330.43px;font-size:25.6px;line-height:31px;color:#fff;font-weight:700;transform:scaleX(0.9524);-webkit-text-stroke:0.4px #246bfd;">Warehouse</span>
<span class="t" style="left:435.60px;top:422.70px;font-size:20.5px;line-height:25px;color:#111;transform:scaleX(1.0917);-webkit-text-stroke:0.3px;">A Plus Approach Limited</span>
<span class="t" style="left:435.60px;top:454.33px;font-size:13.2px;line-height:16px;color:#808080;transform:scaleX(1.0406);-webkit-text-stroke:0.2px;">351 Amanda Locks,Willmschester,</span>
<span class="t" style="left:435.60px;top:470.63px;font-size:13.2px;line-height:16px;color:#808080;transform:scaleX(1.0341);-webkit-text-stroke:0.2px;">Rhode Island, USA</span>
<span class="t" style="left:335.00px;top:537.09px;font-size:15.6px;line-height:19px;color:#111;transform:scaleX(1.0488);-webkit-text-stroke:0.3px;">Details</span>
<span class="t" style="left:335.00px;top:574.83px;font-size:15.8px;line-height:19px;color:#555;transform:scaleX(1.0461);-webkit-text-stroke:0.2px;">Warehouse Code</span>
<span class="t" style="left:564.40px;top:574.93px;font-size:15.5px;line-height:19px;color:#111;transform:scaleX(0.9633);-webkit-text-stroke:0.3px;">APLUSAPP001</span>
<span class="t" style="left:335.00px;top:606.83px;font-size:15.8px;line-height:19px;color:#555;transform:scaleX(1.0649);-webkit-text-stroke:0.2px;">Company</span>
<span class="t" style="left:564.40px;top:606.93px;font-size:15.5px;line-height:19px;color:#111;transform:scaleX(0.9645);-webkit-text-stroke:0.3px;">HOLISTIC OIL &amp; GAS</span>
<span class="t" style="left:335.00px;top:638.83px;font-size:15.8px;line-height:19px;color:#555;transform:scaleX(1.0481);-webkit-text-stroke:0.2px;">Warehouse Manager</span>
<span class="t" style="left:564.40px;top:638.93px;font-size:15.5px;line-height:19px;color:#111;-webkit-text-stroke:0.3px;">Chris Evans</span>
<span class="t" style="left:335.00px;top:670.83px;font-size:15.8px;line-height:19px;color:#555;transform:scaleX(1.0380);-webkit-text-stroke:0.2px;">Status</span>
<span class="t" style="left:564.40px;top:670.93px;font-size:15.5px;line-height:19px;color:#2e9e3a;transform:scaleX(1.0777);-webkit-text-stroke:0.2px;">Active</span>
<span class="t" style="left:355.50px;top:734.90px;font-size:22.8px;line-height:27px;color:#111;font-weight:700;transform:scaleX(0.9725);-webkit-text-stroke:0.35px #f9f9f9;">526</span>
<span class="t" style="left:355.50px;top:768.29px;font-size:13.6px;line-height:16px;color:#555;transform:scaleX(1.0271);-webkit-text-stroke:0.2px;">Available Stock (Unit(s))</span>
<span class="t" style="left:570.00px;top:734.90px;font-size:22.8px;line-height:27px;color:#111;font-weight:700;transform:scaleX(0.9930);-webkit-text-stroke:0.35px #f9f9f9;">50.32K</span>
<span class="t" style="left:570.00px;top:768.29px;font-size:13.6px;line-height:16px;color:#555;transform:scaleX(0.9565);-webkit-text-stroke:0.2px;">Assets (USD)</span>
<span class="t" style="left:785.50px;top:406.53px;font-size:15.5px;line-height:19px;color:#111;transform:scaleX(1.0439);-webkit-text-stroke:0.3px;">Stock In-Bound Requests</span>
<span class="t" style="left:1535.00px;top:409.69px;font-size:11px;line-height:13px;color:#fff;font-weight:700;transform:scaleX(0.8978);">Complete</span>
<span class="t" style="left:796.00px;top:449.69px;font-size:13.3px;line-height:16px;color:#666;transform:scaleX(0.9593);-webkit-text-stroke:0.2px;">Sr. No.</span>
<span class="t" style="left:874.25px;top:449.69px;font-size:13.3px;line-height:16px;color:#666;transform:scaleX(1.0675);-webkit-text-stroke:0.2px;">Request Code</span>
<span class="t" style="left:1067.50px;top:449.69px;font-size:13.3px;line-height:16px;color:#666;transform:scaleX(1.0481);-webkit-text-stroke:0.2px;">Request Type</span>
<span class="t" style="left:1221.25px;top:449.69px;font-size:13.3px;line-height:16px;color:#666;transform:scaleX(1.1102);-webkit-text-stroke:0.2px;">Total Qty</span>
<span class="t" style="left:1379.50px;top:449.69px;font-size:13.3px;line-height:16px;color:#666;transform:scaleX(1.0761);-webkit-text-stroke:0.2px;">Request Date</span>
<span class="t" style="left:1515.00px;top:449.69px;font-size:13.3px;line-height:16px;color:#666;transform:scaleX(1.0867);-webkit-text-stroke:0.2px;">Total Cost</span>
<span class="t" style="left:809.40px;top:488.89px;font-size:13.6px;line-height:16px;color:#111;-webkit-text-stroke:0.3px;">01</span>
<span class="t" style="left:874.25px;top:488.99px;font-size:13.3px;line-height:16px;color:#111;transform:scaleX(1.0927);-webkit-text-stroke:0.3px;">MINB/2023/11/00065</span>
<span class="t" style="left:1063.15px;top:488.99px;font-size:13.3px;line-height:16px;color:#111;transform:scaleX(1.0833);-webkit-text-stroke:0.3px;">Opening Stock</span>
<span class="t" style="left:1243.20px;top:488.89px;font-size:13.6px;line-height:16px;color:#111;-webkit-text-stroke:0.3px;">10</span>
<span class="t" style="left:1362.00px;top:488.99px;font-size:13.3px;line-height:16px;color:#111;transform:scaleX(1.0520);-webkit-text-stroke:0.3px;">27 Jan 09:45 AM</span>
<span class="t" style="left:1518.25px;top:488.99px;font-size:13.3px;line-height:16px;color:#111;transform:scaleX(1.0312);-webkit-text-stroke:0.3px;">$ 1200.00</span>
<span class="t" style="left:785.50px;top:548.53px;font-size:15.5px;line-height:19px;color:#111;transform:scaleX(1.0581);-webkit-text-stroke:0.3px;">Stock Out-Bound Requests</span>
<span class="t" style="left:1535.00px;top:551.69px;font-size:11px;line-height:13px;color:#fff;font-weight:700;transform:scaleX(0.8978);">Complete</span>
<span class="t" style="left:796.00px;top:591.69px;font-size:13.3px;line-height:16px;color:#666;transform:scaleX(0.9593);-webkit-text-stroke:0.2px;">Sr. No.</span>
<span class="t" style="left:874.25px;top:591.69px;font-size:13.3px;line-height:16px;color:#666;transform:scaleX(1.0675);-webkit-text-stroke:0.2px;">Request Code</span>
<span class="t" style="left:1070.00px;top:591.69px;font-size:13.3px;line-height:16px;color:#666;transform:scaleX(1.0481);-webkit-text-stroke:0.2px;">Request Type</span>
<span class="t" style="left:1221.25px;top:591.69px;font-size:13.3px;line-height:16px;color:#666;transform:scaleX(1.1102);-webkit-text-stroke:0.2px;">Total Qty</span>
<span class="t" style="left:1379.50px;top:591.69px;font-size:13.3px;line-height:16px;color:#666;transform:scaleX(1.0761);-webkit-text-stroke:0.2px;">Request Date</span>
<span class="t" style="left:1515.00px;top:591.69px;font-size:13.3px;line-height:16px;color:#666;transform:scaleX(1.0867);-webkit-text-stroke:0.2px;">Total Cost</span>
<span class="t" style="left:809.40px;top:630.89px;font-size:13.6px;line-height:16px;color:#111;-webkit-text-stroke:0.3px;">01</span>
<span class="t" style="left:874.25px;top:630.99px;font-size:13.3px;line-height:16px;color:#111;transform:scaleX(1.1165);-webkit-text-stroke:0.3px;">MOUB/2024/01/00029</span>
<span class="t" style="left:1070.15px;top:630.99px;font-size:13.3px;line-height:16px;color:#111;transform:scaleX(1.0611);-webkit-text-stroke:0.3px;">Manual Sales</span>
<span class="t" style="left:1243.20px;top:630.89px;font-size:13.6px;line-height:16px;color:#111;-webkit-text-stroke:0.3px;">10</span>
<span class="t" style="left:1362.00px;top:630.99px;font-size:13.3px;line-height:16px;color:#111;transform:scaleX(1.0520);-webkit-text-stroke:0.3px;">30 Jan 09:14 AM</span>
<span class="t" style="left:1518.25px;top:630.99px;font-size:13.3px;line-height:16px;color:#111;transform:scaleX(1.0312);-webkit-text-stroke:0.3px;">$ 1200.00</span>
<span class="t" style="left:785.50px;top:690.73px;font-size:15.5px;line-height:19px;color:#111;transform:scaleX(1.0507);-webkit-text-stroke:0.3px;">Inventory</span>
<span class="t" style="left:1535.00px;top:693.69px;font-size:11px;line-height:13px;color:#fff;font-weight:700;transform:scaleX(0.8978);">Complete</span>
<span class="t" style="left:796.00px;top:733.69px;font-size:13.3px;line-height:16px;color:#666;transform:scaleX(0.9593);-webkit-text-stroke:0.2px;">Sr. No.</span>
<span class="t" style="left:896.00px;top:733.69px;font-size:13.3px;line-height:16px;color:#666;transform:scaleX(1.0820);-webkit-text-stroke:0.2px;">Image</span>
<span class="t" style="left:1010.75px;top:733.69px;font-size:13.3px;line-height:16px;color:#666;transform:scaleX(1.0498);-webkit-text-stroke:0.2px;">Name</span>
<span class="t" style="left:1222.50px;top:733.69px;font-size:13.3px;line-height:16px;color:#666;transform:scaleX(1.0959);-webkit-text-stroke:0.2px;">Total Qty</span>
<span class="t" style="left:1359.50px;top:733.69px;font-size:13.3px;line-height:16px;color:#666;transform:scaleX(1.0720);-webkit-text-stroke:0.2px;">Item Usage Type</span>
<span class="t" style="left:1513.75px;top:733.69px;font-size:13.3px;line-height:16px;color:#666;transform:scaleX(1.0551);-webkit-text-stroke:0.2px;">Total Price</span>
<span class="t" style="left:809.40px;top:792.89px;font-size:13.6px;line-height:16px;color:#111;-webkit-text-stroke:0.3px;">01</span>
<span class="t" style="left:1010.75px;top:781.14px;font-size:13.3px;line-height:16px;color:#2f6fdb;transform:scaleX(1.0561);-webkit-text-stroke:0.2px;">Amaron Oil</span>
<span class="t" style="left:1010.75px;top:804.89px;font-size:13.3px;line-height:16px;color:#111;transform:scaleX(1.0324);-webkit-text-stroke:0.3px;">(AMARONO001 / AO)</span>
<span class="t" style="left:1222.50px;top:792.99px;font-size:13.3px;line-height:16px;color:#111;transform:scaleX(0.9802);-webkit-text-stroke:0.3px;">10 Unit(s)</span>
<span class="t" style="left:1396.00px;top:792.99px;font-size:13.3px;line-height:16px;color:#111;transform:scaleX(1.0221);-webkit-text-stroke:0.3px;">Sales</span>
<span class="t" style="left:1518.25px;top:792.99px;font-size:13.3px;line-height:16px;color:#111;transform:scaleX(1.0312);-webkit-text-stroke:0.3px;">$ 1200.00</span>
</body></html>
